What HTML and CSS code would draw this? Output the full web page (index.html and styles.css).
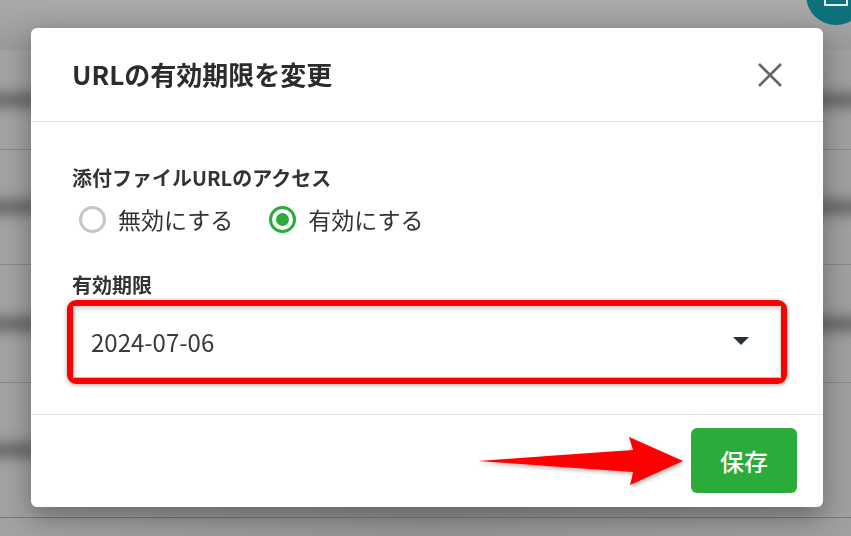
FILE: index.html
```html
<!DOCTYPE html>
<html lang="ja">

<head>
  <meta charset="UTF-8" />
  <meta name="viewport" content="width=device-width, initial-scale=1.0" />
  <title>URLの有効期限を変更</title>
  <link rel="stylesheet" href="styles.css">
</head>

<body>
  <!-- Page behind the dialog (dimmed and blurred) -->
  <div class="page">
    <header class="topbar">
      <span class="avatar"><span class="avatar-mark"></span></span>
    </header>
    <ul class="rows">
      <li class="row row-1"><span class="blob blob-left"></span><span class="blob blob-right"></span></li>
      <li class="row row-2"><span class="blob blob-left"></span><span class="blob blob-right"></span></li>
      <li class="row row-3"><span class="blob blob-left"></span><span class="blob blob-right"></span></li>
      <li class="row row-4"><span class="blob blob-left"></span></li>
    </ul>
  </div>

  <!-- Dialog -->
  <div class="overlay">
    <section class="modal" role="dialog" aria-labelledby="modal-title">
      <header class="modal-header">
        <h2 id="modal-title" class="modal-title">URLの有効期限を変更</h2>
        <button class="close-btn" aria-label="閉じる">
          <svg width="26" height="24" viewBox="0 0 26 24">
            <path d="M2 1 L24 23 M24 1 L2 23" stroke="#666" stroke-width="2.6" fill="none" />
          </svg>
        </button>
      </header>

      <div class="modal-body">
        <p class="field-label">添付ファイルURLのアクセス</p>
        <div class="radio-group">
          <label class="radio"><span class="radio-mark"></span>無効にする</label>
          <label class="radio checked"><span class="radio-mark"></span>有効にする</label>
        </div>

        <p class="field-label field-label-date">有効期限</p>
        <div class="highlight">
          <div class="select">
            <span class="select-value">2024-07-06</span>
            <span class="caret"></span>
          </div>
        </div>
      </div>

      <footer class="modal-footer">
        <!-- annotation arrow pointing at the save button -->
        <svg class="arrow" width="210" height="52" viewBox="0 0 210 52">
          <path d="M0 25 L155 14 Q153 7 151 1 L205 25 L152 49 Q154 42 155 36 Z" fill="#ff0000" />
        </svg>
        <button class="save-btn">保存</button>
      </footer>
    </section>
  </div>
</body>

</html>
```

FILE: styles.css
```css
*,
*::after,
*::before {
  margin: 0;
  padding: 0;
  box-sizing: border-box;
}

html,
body {
  height: 100%;
  overflow: hidden;
}

body {
  font-family: "Noto Sans CJK JP", "Noto Sans", sans-serif;
  color: #333;
  background: linear-gradient(90deg, #a3a3a3 0%, #959595 50%, #a0a0a0 100%);
}

/* ---------- background page ---------- */

.page {
  height: 100%;
}

.topbar {
  height: 50px;
  display: flex;
  justify-content: flex-end;
  background: linear-gradient(180deg, #a9a9a9, #9a9a9a);
}

.avatar {
  width: 60px;
  height: 60px;
  margin: -35px -15px 0 0;
  border-radius: 50%;
  background-color: #0e717c;
  display: flex;
  align-items: flex-end;
  justify-content: center;
  padding-bottom: 19px;
}

.avatar-mark {
  width: 24px;
  height: 7px;
  border: 2px solid #dfeaeb;
  border-top: 0;
}

.rows {
  list-style: none;
}

.row {
  display: flex;
  align-items: center;
  justify-content: space-between;
  border-bottom: 1px solid #888;
}

.row-1 {
  height: 100px;
}

.row-2 {
  height: 115px;
}

.row-3 {
  height: 118px;
}

.row-4 {
  height: 135px;
  border-bottom-color: #7a7a7a;
}

.blob {
  display: block;
  width: 70px;
  height: 12px;
  background-color: #5a5a5a;
  filter: blur(7px);
  border-radius: 6px;
}

.blob-left {
  margin-left: -30px;
}

.blob-right {
  margin-right: -30px;
}

/* ---------- dialog ---------- */

.overlay {
  position: fixed;
  inset: 0;
  padding: 28px 0 0 31px;
}

.modal {
  width: 792px;
  background-color: #fff;
  border-radius: 6px;
  box-shadow: 0 10px 28px rgba(0, 0, 0, 0.35);
}

.modal-header {
  height: 94px;
  padding: 0 40px 0 41px;
  display: flex;
  align-items: center;
  justify-content: space-between;
  border-bottom: 1px solid #e2e2e2;
}

.modal-title {
  font-size: 26px;
  font-weight: 700;
  color: #2c2c2c;
  line-height: 1.4;
}

.close-btn {
  background: transparent;
  border: 0;
  display: flex;
  cursor: pointer;
}

.modal-body {
  padding: 42px 36px 30px 41px;
}

.field-label {
  font-size: 20px;
  font-weight: 700;
  line-height: 28px;
  color: #333;
}

.radio-group {
  margin-top: 11px;
  display: flex;
  gap: 36px;
  padding-left: 7px;
}

.radio {
  display: flex;
  align-items: center;
  gap: 12px;
  font-size: 23px;
  line-height: 32px;
  color: #333;
  cursor: pointer;
}

.radio-mark {
  width: 27px;
  height: 27px;
  border-radius: 50%;
  border: 3px solid #c6c6c6;
  display: flex;
  align-items: center;
  justify-content: center;
}

.radio.checked .radio-mark {
  border-color: #2aab3a;
}

.radio.checked .radio-mark::after {
  content: "";
  width: 13px;
  height: 13px;
  border-radius: 50%;
  background-color: #2aab3a;
}

.field-label-date {
  margin-top: 36px;
}

/* red annotation frame around the select */
.highlight {
  margin: 1px 0 0 -5px;
  border: 6px solid #ff0000;
  border-radius: 9px;
  box-shadow: 0 1px 4px rgba(0, 0, 0, 0.35);
}

.select {
  height: 72px;
  padding: 0 31px 2px 17px;
  display: flex;
  align-items: center;
  justify-content: space-between;
  border: 1px solid #d8d8d8;
  border-bottom-color: #bcbcbc;
  box-shadow: inset 1px 2px 4px rgba(0, 0, 0, 0.18);
  background-color: #fff;
}

.select-value {
  font-size: 24px;
  color: #3a3a3a;
}

.caret {
  width: 0;
  height: 0;
  border-left: 8px solid transparent;
  border-right: 8px solid transparent;
  border-top: 8px solid #263238;
}

.modal-footer {
  position: relative;
  padding: 13px 26px 14px;
  display: flex;
  justify-content: flex-end;
  border-top: 1px solid #e2e2e2;
}

.arrow {
  position: absolute;
  left: 447px;
  top: 21px;
  filter: drop-shadow(1px 2px 2px rgba(0, 0, 0, 0.3));
}

.save-btn {
  width: 106px;
  height: 65px;
  border: 0;
  border-radius: 6px;
  background-color: #2aab3a;
  color: #fff;
  font-family: inherit;
  font-size: 24px;
  font-weight: 500;
  cursor: pointer;
}
```
